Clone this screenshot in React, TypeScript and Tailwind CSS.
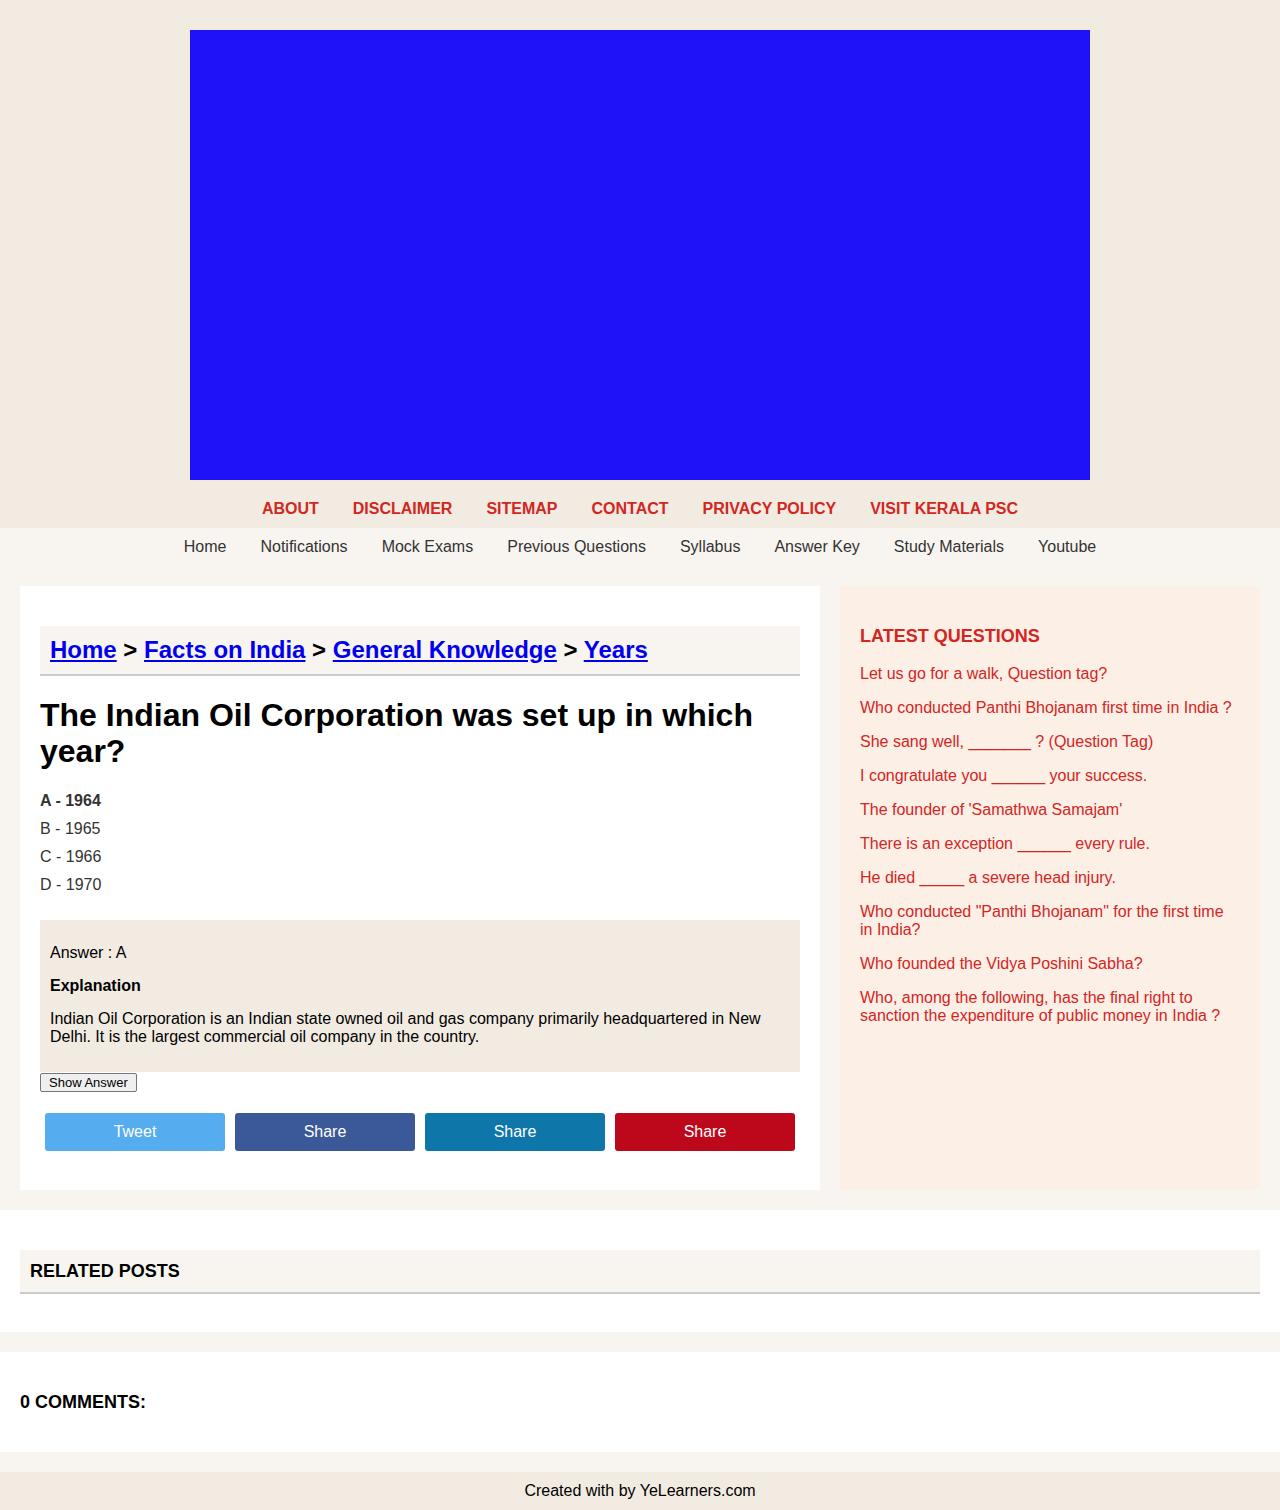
import React from "react";

const topNav = ["ABOUT", "DISCLAIMER", "SITEMAP", "CONTACT", "PRIVACY POLICY", "VISIT KERALA PSC"];
const mainNav = ["Home", "Notifications", "Mock Exams", "Previous Questions", "Syllabus", "Answer Key", "Study Materials", "Youtube"];
const latest = [
  "Let us go for a walk, Question tag?",
  "Who conducted Panthi Bhojanam first time in India ?",
  "She sang well, _______ ? (Question Tag)",
  "I congratulate you ______ your success.",
  "The founder of 'Samathwa Samajam'",
  "There is an exception ______ every rule.",
  "He died _____ a severe head injury.",
  "Who conducted \"Panthi Bhojanam\" for the first time in India?",
  "Who founded the Vidya Poshini Sabha?",
  "Who, among the following, has the final right to sanction the expenditure of public money in India ?",
];

export default function App() {
  return (
    <div className="min-h-[1510px] bg-[#f8f5f1] text-black" style={{ fontFamily: '"Liberation Sans", Arial, sans-serif' }}>
      <header className="bg-[#f1ebe2] pt-[30px]">
        <div className="mx-auto h-[450px] w-[900px] bg-[#1f12f8]" />
        <nav className="flex justify-center gap-[34px] pt-[19px] pb-[9px] text-[16px] font-bold leading-[20px] text-[#d2261f]">
          {topNav.map((t) => (
            <a key={t} className="cursor-pointer">{t}</a>
          ))}
        </nav>
      </header>
      <nav className="flex h-[38px] items-center justify-center gap-[34px] text-[16px] text-[#333]">
        {mainNav.map((t) => (
          <a key={t} className="cursor-pointer">{t}</a>
        ))}
      </nav>
      <main className="flex gap-[20px] p-[20px]">
        <article className="w-[800px] bg-white px-[20px] pt-[20px] pb-[39px]">
          <div className="mt-[20px] border-b-2 border-[#cccccc] bg-[#f8f5f1] px-[10px] py-[10px] text-[24px] font-bold leading-[28px]">
            <a className="cursor-pointer text-[#0000ee] underline">Home</a> &gt;{" "}
            <a className="cursor-pointer text-[#0000ee] underline">Facts on India</a> &gt;{" "}
            <a className="cursor-pointer text-[#0000ee] underline">General Knowledge</a> &gt;{" "}
            <a className="cursor-pointer text-[#0000ee] underline">Years</a>
          </div>
          <h1 className="mt-[21px] text-[32px] font-bold leading-[36px]">
            The Indian Oil Corporation was set up in which year?
          </h1>
          <div className="mt-[18px] text-[16px] leading-[28px] text-[#333]">
            <div className="font-bold">A - 1964</div>
            <div>B - 1965</div>
            <div>C - 1966</div>
            <div>D - 1970</div>
          </div>
          <div className="mt-[21px] flex flex-col gap-[15px] bg-[#f1ebe2] px-[10px] pt-[24px] pb-[26px] text-[16px] leading-[18px]">
            <p>Answer : A</p>
            <p className="font-bold">Explanation</p>
            <p>
              Indian Oil Corporation is an Indian state owned oil and gas company primarily headquartered in New Delhi. It is the largest commercial oil company in the country.
            </p>
          </div>
          <button className="mt-[1px] block h-[19px] rounded-[2px] border border-[#767676] bg-[#efefef] px-[8px] text-[13px] leading-[15px] text-black">
            Show Answer
          </button>
          <div className="mt-[21px] flex">
            <a className="mx-[5px] flex h-[38px] w-[180px] items-center justify-center rounded-[3px] bg-[#55acee] text-[16px] text-white">Tweet</a>
            <a className="mx-[5px] flex h-[38px] w-[180px] items-center justify-center rounded-[3px] bg-[#3b5998] text-[16px] text-white">Share</a>
            <a className="mx-[5px] flex h-[38px] w-[180px] items-center justify-center rounded-[3px] bg-[#0e76a8] text-[16px] text-white">Share</a>
            <a className="mx-[5px] flex h-[38px] w-[180px] items-center justify-center rounded-[3px] bg-[#bd081c] text-[16px] text-white">Share</a>
          </div>
        </article>
        <aside className="flex-1 bg-[#fcefe6] p-[20px]">
          <h3 className="mt-[19px] text-[18px] font-bold leading-[22px] text-[#d2261f]">LATEST QUESTIONS</h3>
          <div className="mt-[18px] flex flex-col gap-[16px] text-[16px] leading-[18px] text-[#d2261f]">
            {latest.map((q) => (
              <a key={q} className="cursor-pointer">{q}</a>
            ))}
          </div>
        </aside>
      </main>
      <section className="bg-white px-[20px] pt-[40px] pb-[38px]">
        <div className="border-b-2 border-[#cccccc] bg-[#f8f5f1] px-[10px] py-[10px] text-[18px] font-bold leading-[22px]">
          RELATED POSTS
        </div>
      </section>
      <div className="h-[20px]" />
      <section className="flex h-[100px] items-center bg-white px-[20px] text-[18px] font-bold">
        0 COMMENTS:
      </section>
      <div className="h-[20px]" />
      <footer className="flex h-[38px] items-center justify-center bg-[#f1ebe2] text-[16px]">
        Created with by YeLearners.com
      </footer>
    </div>
  );
}
